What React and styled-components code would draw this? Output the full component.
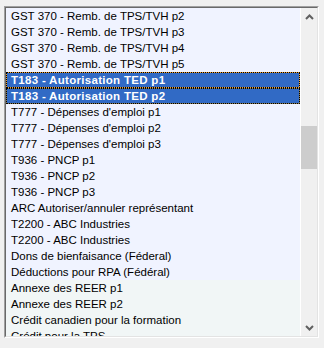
import React from "react";
import styled, { createGlobalStyle } from "styled-components";

const Global = createGlobalStyle`
  html, body { margin: 0; padding: 0; background: #f0f0f0; }
  body { width: 324px; height: 348px; overflow: hidden; }
`;

const Page = styled.div`
  width: 324px;
  height: 348px;
  padding: 6px 0 0 4px;
  box-sizing: border-box;
  background: #f0f0f0;
`;

const ListBox = styled.div`
  width: 315px;
  height: 332px;
  box-sizing: border-box;
  border: 1px solid;
  border-color: #a0a0a0 #ffffff #ffffff #a0a0a0;
  display: flex;
`;

const Inner = styled.div`
  flex: 1;
  display: flex;
  border: 1px solid;
  border-color: #696969 #e3e3e3 #e3e3e3 #696969;
  overflow: hidden;
`;

const Rows = styled.div`
  flex: 1;
  display: flex;
  flex-direction: column;
  overflow: hidden;
  border-right: 1px solid #ffffff;
`;

const Row = styled.div`
  flex: 0 0 16px;
  height: 16px;
  box-sizing: border-box;
  padding-left: 5px;
  display: flex;
  align-items: center;
  font-family: "Liberation Sans", Arial, sans-serif;
  font-size: 11.5px;
  white-space: nowrap;
  color: ${(p) => (p.$sel ? "#ffffff" : "#000000")};
  font-weight: ${(p) => (p.$sel ? "bold" : "normal")};
  letter-spacing: ${(p) => (p.$sel ? "0.3px" : "0")};
  background: ${(p) => (p.$alt ? "#f1f6f6" : "#f0f3ff")};
  ${(p) =>
    p.$sel &&
    `
    padding-left: 4px;
    border: 1px dotted #000;
    background: linear-gradient(#316ac5, #316ac5) padding-box, ${p.$focus ? "#f0a030" : "#8a7a50"} border-box;
  `}
`;

const ScrollBar = styled.div`
  width: 16px;
  display: flex;
  flex-direction: column;
  background: #f0f0f0;
`;

const Arrow = styled.div`
  height: 17px;
  display: flex;
  align-items: center;
  justify-content: center;
`;

const Track = styled.div`
  flex: 1;
  display: flex;
  flex-direction: column;
`;

const Thumb = styled.div`
  margin-top: ${(p) => p.$top}px;
  height: ${(p) => p.$h}px;
  background: #cdcdcd;
`;

const items = [
  "GST 370 - Remb. de TPS/TVH p2",
  "GST 370 - Remb. de TPS/TVH p3",
  "GST 370 - Remb. de TPS/TVH p4",
  "GST 370 - Remb. de TPS/TVH p5",
  "T183 - Autorisation TED p1",
  "T183 - Autorisation TED p2",
  "T777 - Dépenses d'emploi p1",
  "T777 - Dépenses d'emploi p2",
  "T777 - Dépenses d'emploi p3",
  "T936 - PNCP p1",
  "T936 - PNCP p2",
  "T936 - PNCP p3",
  "ARC Autoriser/annuler représentant",
  "T2200 - ABC Industries",
  "T2200 - ABC Industries",
  "Dons de bienfaisance (Féderal)",
  "Déductions pour RPA (Fédéral)",
  "Annexe des REER p1",
  "Annexe des REER p2",
  "Crédit canadien pour la formation",
  "Crédit pour la TPS",
];

const Chevron = ({ up }) => (
  <svg width="9" height="6" viewBox="0 0 9 6">
    <path
      d={up ? "M1 5 L4.5 1.5 L8 5" : "M1 1 L4.5 4.5 L8 1"}
      fill="none"
      stroke="#606060"
      strokeWidth="2"
    />
  </svg>
);

export default function App() {
  return (
    <Page>
      <Global />
      <ListBox>
        <Inner>
          <Rows>
            {items.map((t, i) => (
              <Row
                key={i}
                $alt={i >= 17}
                $sel={i === 4 || i === 5}
                $focus={i === 4}
              >
                {t}
              </Row>
            ))}
          </Rows>
          <ScrollBar>
            <Arrow>
              <Chevron up />
            </Arrow>
            <Track>
              <Thumb $top={101} $h={43} />
            </Track>
            <Arrow>
              <Chevron />
            </Arrow>
          </ScrollBar>
        </Inner>
      </ListBox>
    </Page>
  );
}
